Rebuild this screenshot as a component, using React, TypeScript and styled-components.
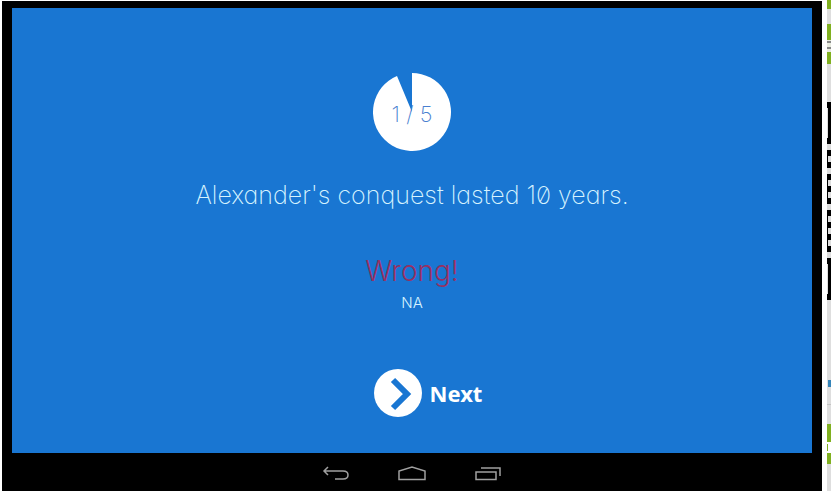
import React from 'react';
import styled, { createGlobalStyle } from 'styled-components';

const GlobalStyle = createGlobalStyle`
  * { box-sizing: border-box; }
  body { margin: 0; background: #fff; }
`;

const Page = styled.div`
  display: flex;
  gap: 5px;
  min-height: 100vh;
  padding: 1px 0 0 2px;
`;

const Tablet = styled.div`
  flex: 1;
  display: flex;
  flex-direction: column;
  padding: 7px 10px 0;
  background: #000;
`;

const Quiz = styled.main`
  flex: 1;
  display: flex;
  flex-direction: column;
  align-items: center;
  padding: 65px 20px 35px;
  background: #1976d2;
  color: #d6f3ff;
  font-family: Inter, 'Liberation Sans', sans-serif;
  font-weight: 200;
  font-feature-settings: 'cv11', 'zero';
  text-align: center;
`;

const Progress = styled.div`
  display: grid;
  place-items: center;
  width: 78px;
  height: 78px;

  > * { grid-area: 1 / 1; }
`;

const Count = styled.span`
  padding-top: 4px;
  color: #4a7fd0;
  font-size: 22px;
  line-height: 28px;
`;

const Question = styled.h1`
  margin: 24px 0 0;
  font-size: 25px;
  line-height: 40px;
  font-weight: 200;
`;

const Verdict = styled.p`
  margin: 36px 0 0;
  color: #963062;
  font-size: 28px;
  line-height: 40px;
  font-weight: 300;
`;

const Note = styled.p`
  margin: 0;
  font-size: 15px;
  line-height: 24px;
  font-weight: 300;
`;

const NextButton = styled.button`
  display: flex;
  align-items: center;
  gap: 8px;
  margin: 54px 0 0 32px;
  padding: 0;
  border: 0;
  background: none;
  color: #fff;
  font: bold 22px/44px 'Noto Sans', 'Open Sans', sans-serif;
  cursor: pointer;
`;

const NavBar = styled.nav`
  display: flex;
  justify-content: center;
  align-items: center;
  gap: 46px;
  height: 38px;
  padding-top: 4px;
`;

const NavButton = styled.button`
  display: flex;
  padding: 0;
  border: 0;
  background: none;
  color: #a0a0a0;
  cursor: pointer;
`;

const Edge = styled.aside`
  width: 4px;
  margin-top: -1px;
  background: #dedede;
`;

const Band = styled.div<{ $h: number; $color: string; $line?: string }>`
  height: ${p => p.$h}px;
  background: ${p => p.$color};
  border-left: ${p => (p.$line ? `1px solid ${p.$line}` : '0')};
`;

const BandMark = styled.div<{ $color: string }>`
  height: 3px;
  border-bottom: 2px solid ${p => p.$color};
`;

const green = '#80b020';
const grey = '#dedede';
const qrRows = [
  [6, grey, grey], [6, '#000', '#000'], [6, grey, '#000'], [6, '#000', '#000'],
  [6, grey, grey], [6, '#000', '#000'], [6, grey, '#000'], [6, '#000', '#000'],
  [6, grey, '#000'], [6, '#000', '#000'], [6, grey, grey], [6, '#000', '#000'],
  [6, grey, '#000'], [6, '#000', '#000'], [6, grey, '#000'], [6, '#000', '#000'],
  [6, grey, '#000'], [6, '#000', '#000'], [6, grey, grey],
] as const;

export default function App() {
  return (
    <>
      <GlobalStyle />
      <Page>
        <Tablet>
          <Quiz>
            <Progress>
              <svg width="78" height="78" viewBox="0 0 78 78" aria-hidden="true">
                <path d="M39 39V0A39 39 0 1 1 24 3Z" fill="#fff" />
              </svg>
              <Count>1 / 5</Count>
            </Progress>
            <Question>Alexander's conquest lasted 10 years.</Question>
            <Verdict>Wrong!</Verdict>
            <Note>NA</Note>
            <NextButton type="button">
              <svg width="48" height="48" viewBox="0 0 48 48" aria-hidden="true">
                <circle cx="24" cy="24" r="24" fill="#fff" />
                <path d="M19 11L33 25L19 39" fill="none" stroke="#1976d2" strokeWidth="6" />
              </svg>
              Next
            </NextButton>
          </Quiz>
          <NavBar aria-label="System">
            <NavButton type="button" aria-label="Back">
              <svg width="30" height="16" viewBox="0 0 30 16" fill="none" stroke="currentColor" strokeWidth="1.500">
                <path d="M7 1L3 5L7 9M3 5H22Q27 5 27 9Q27 13 22 13H14" />
              </svg>
            </NavButton>
            <NavButton type="button" aria-label="Home">
              <svg width="30" height="16" viewBox="0 0 30 16" fill="none" stroke="currentColor" strokeWidth="1.500">
                <path d="M2 13.500V5L15 1L28 5V13.500Z" />
              </svg>
            </NavButton>
            <NavButton type="button" aria-label="Recent apps">
              <svg width="30" height="16" viewBox="0 0 30 16" fill="none" stroke="currentColor" strokeWidth="1.500">
                <path d="M3 6H23V13.500H3ZM8 2H27V10" />
              </svg>
            </NavButton>
          </NavBar>
        </Tablet>
        <Edge aria-hidden="true">
          <Band $h={9} $color={green} />
          <Band $h={15} $color={grey} />
          <Band $h={16} $color={green} />
          <Band $h={12} $color="#e8ecdf">
            <BandMark $color="#888" />
            <BandMark $color="#e8ecdf" />
            <BandMark $color="#888" />
          </Band>
          <Band $h={12} $color={green} />
          <Band $h={38} $color={grey} />
          <Band $h={6} $color="#000" />
          <Band $h={30} $color="#000" $line={grey} />
          <Band $h={6} $color="#000" />
          {qrRows.map(([h, color, line], i) => (
            <Band key={i} $h={h} $color={color} $line={line} />
          ))}
          <Band $h={6} $color="#000" />
          <Band $h={30} $color="#000" $line={grey} />
          <Band $h={6} $color="#000" />
          <Band $h={80} $color={grey} />
          <Band $h={7} $color="#3584b8" $line={grey} />
          <Band $h={17} $color={grey} />
          <Band $h={1} $color="#c4c4c4" />
          <Band $h={19} $color={grey} />
          <Band $h={18} $color={green} />
          <Band $h={2} $color="#fff" />
          <Band $h={7} $color="#fff" $line={green} />
          <Band $h={2} $color="#fff" />
          <Band $h={11} $color={green} />
        </Edge>
      </Page>
    </>
  );
}
